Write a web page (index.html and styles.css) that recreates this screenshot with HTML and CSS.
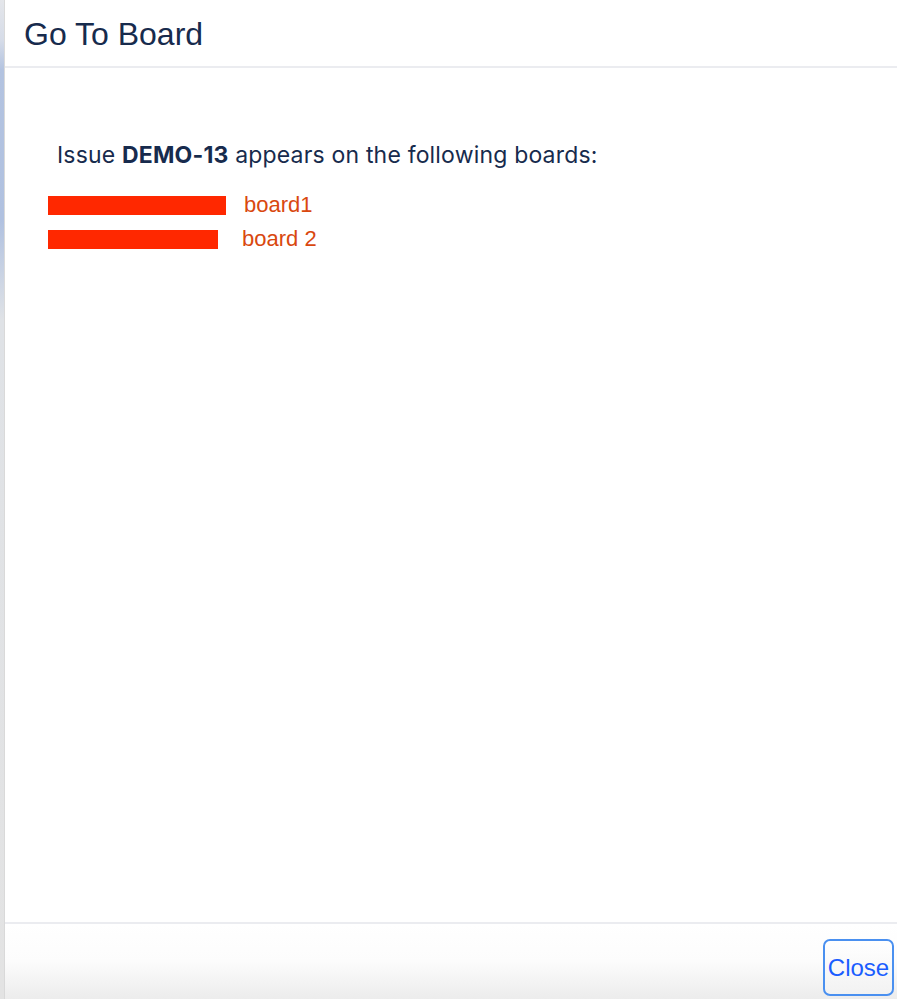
FILE: index.html
```html
<!DOCTYPE html>
<html>
<head>
<meta charset="utf-8">
<link rel="stylesheet" href="styles.css">
</head>
<body>
<div class="page">
  <div class="edge"></div>
  <div class="dialog">
    <div class="header"><h1 class="title">Go To Board</h1></div>
    <div class="content">
      <p class="intro">Issue <strong>DEMO-13</strong> appears on the following boards:</p>
      <ul class="boards">
        <li class="board"><span class="redact r1"></span><a class="link" href="#">board1</a></li>
        <li class="board"><span class="redact r2"></span><a class="link" href="#">board 2</a></li>
      </ul>
    </div>
    <div class="footer"><button class="close">Close</button></div>
  </div>
</div>
</body>
</html>
```
FILE: styles.css
```css
html, body { margin: 0; padding: 0; height: 100%; }
body { font-family: "Liberation Sans", Arial, sans-serif; background: #fff; overflow: hidden; }
.page { display: flex; height: 999px; width: 897px; }
.edge {
  width: 4px; flex: none;
  background: linear-gradient(to bottom, #e4e6ea 0px, #d6dce8 40px, #b3c3e0 70px, #b0c1e0 220px, #dfe2e6 320px, #e3e3e3 100%);
  border-right: 1px solid #d9d9d9;
}
.dialog { flex: 1; display: flex; flex-direction: column; min-width: 0; }
.header { height: 68px; border-bottom: 2px solid #ebecf0; display: flex; align-items: center; padding-left: 19px; padding-top: 3px; box-sizing: border-box; flex: none; }
.title { margin: 0; font-weight: 400; font-size: 32px; color: #172b4d; }
.content { flex: 1; padding: 73px 0 0 43px; }
.intro { margin: 0 0 26px 9px; font-family: Inter, "Liberation Sans", sans-serif; font-size: 23px; letter-spacing: 0.18px; color: #172b4d; line-height: 28px; }
.intro strong { font-weight: 700; }
.boards { list-style: none; margin: 0; padding: 0; display: flex; flex-direction: column; gap: 14px; }
.board { display: flex; align-items: center; height: 20px; }
.redact { display: block; height: 19px; background: #ff2800; }
.r1 { width: 178px; margin-right: 18px; }
.r2 { width: 170px; margin-right: 24px; }
.link { color: #d9480f; text-decoration: none; font-size: 22px; }
.footer {
  height: 72px; flex: none; border-top: 2px solid #ebecf0;
  background: linear-gradient(to bottom, #ffffff 0%, #fcfcfc 50%, #ececec 100%);
  display: flex; justify-content: flex-end; align-items: flex-end; padding: 0 3px 3px 0;
}
.close {
  width: 71px; height: 57px; border: 2px solid #4a90f0; border-radius: 7px;
  background: linear-gradient(to bottom, #ffffff, #f2f2f2);
  color: #1a5dff; font-family: "Liberation Sans", Arial, sans-serif; font-size: 24px; padding: 0;
}
```
